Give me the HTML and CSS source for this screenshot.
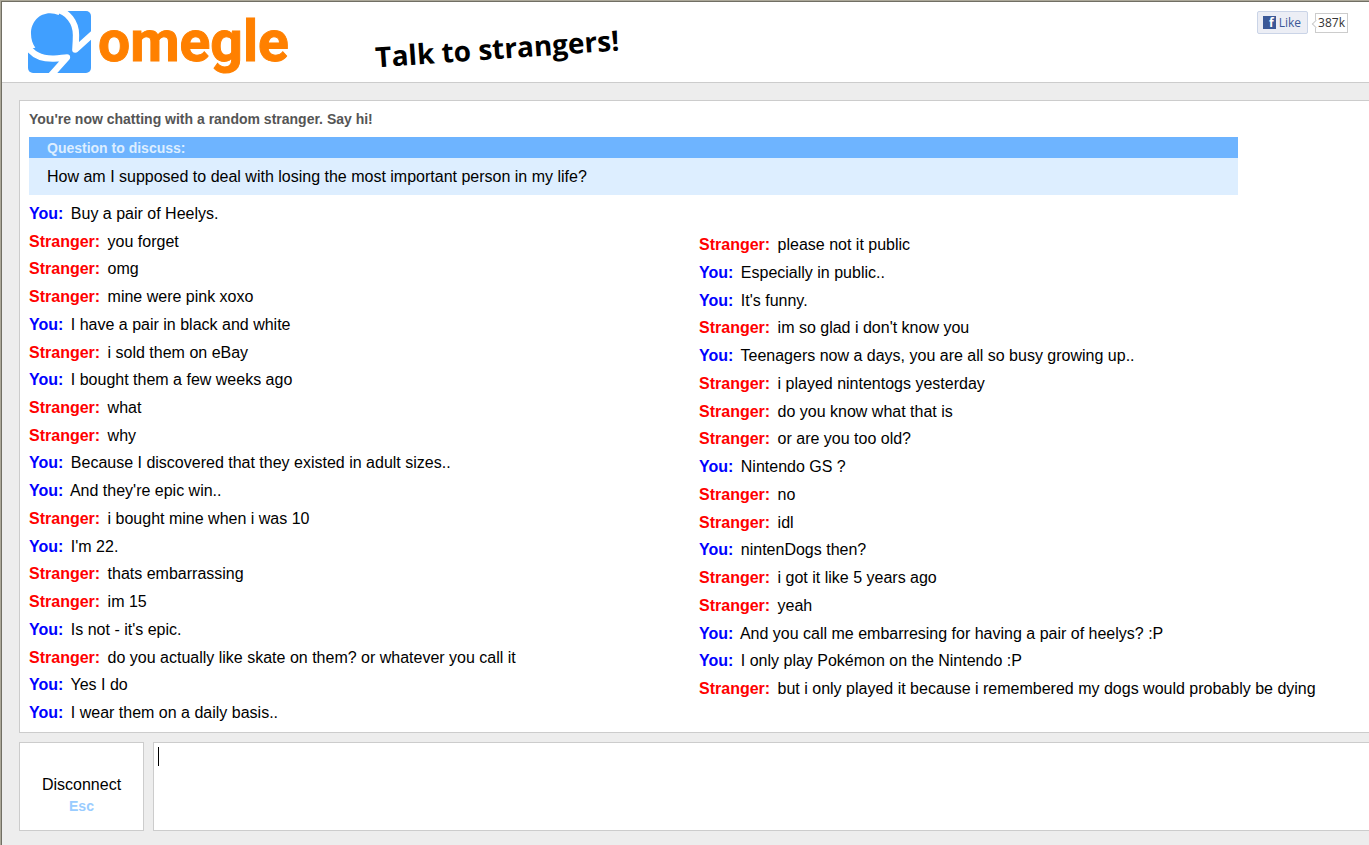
FILE: index.html
```
<!DOCTYPE html>
<html lang="en">
  <head>
    <meta charset="utf-8">
    <title>Omegle</title>
    <meta name="viewport" content="width=device-width, initial-scale=1.0">
    <link rel="stylesheet" href="styles.css">
  </head>
  <body>
    <header class="header">
      <a class="logo" href="#">
        <svg class="logo-mark" viewBox="0 0 189 186" aria-hidden="true">
          <rect width="189" height="186" rx="15" fill="#409fff"/>
          <path fill="#fff" d="M-2 -2H98L92 12Q80 7 66 7C34 7 9 33 9 68C9 85 14 98 22 110L-2 114Z"/>
          <g fill="none" stroke="#fff" stroke-width="19" stroke-linejoin="round">
            <path d="M82 -6C120 2 144 34 144 72C144 90 143 102 142 116L196 67"/>
            <path d="M-6 100C12 132 45 144 78 143C95 143 106 139 117 139L68 194"/>
          </g>
        </svg>
        <span class="logo-text">omegle</span>
      </a>
      <h1 class="tagline">Talk to strangers!</h1>
      <div class="like">
        <button class="like-button" type="button"><span class="fb" aria-hidden="true">f</span>Like</button>
        <span class="like-count">387k</span>
      </div>
    </header>

    <main class="chat">
      <section class="log">
        <p class="status">You're now chatting with a random stranger. Say hi!</p>
        <div class="question">
          <h2>Question to discuss:</h2>
          <p>How am I supposed to deal with losing the most important person in my life?</p>
        </div>
        <div class="columns">
          <div class="messages">
            <p><b class="you">You:</b> Buy a pair of Heelys.</p>
            <p><b class="stranger">Stranger:</b> you forget</p>
            <p><b class="stranger">Stranger:</b> omg</p>
            <p><b class="stranger">Stranger:</b> mine were pink xoxo</p>
            <p><b class="you">You:</b> I have a pair in black and white</p>
            <p><b class="stranger">Stranger:</b> i sold them on eBay</p>
            <p><b class="you">You:</b> I bought them a few weeks ago</p>
            <p><b class="stranger">Stranger:</b> what</p>
            <p><b class="stranger">Stranger:</b> why</p>
            <p><b class="you">You:</b> Because I discovered that they existed in adult sizes..</p>
            <p><b class="you">You:</b> And they're epic win..</p>
            <p><b class="stranger">Stranger:</b> i bought mine when i was 10</p>
            <p><b class="you">You:</b> I'm 22.</p>
            <p><b class="stranger">Stranger:</b> thats embarrassing</p>
            <p><b class="stranger">Stranger:</b> im 15</p>
            <p><b class="you">You:</b> Is not - it's epic.</p>
            <p><b class="stranger">Stranger:</b> do you actually like skate on them? or whatever you call it</p>
            <p><b class="you">You:</b> Yes I do</p>
            <p><b class="you">You:</b> I wear them on a daily basis..</p>
          </div>
          <div class="messages messages-next">
            <p><b class="stranger">Stranger:</b> please not it public</p>
            <p><b class="you">You:</b> Especially in public..</p>
            <p><b class="you">You:</b> It's funny.</p>
            <p><b class="stranger">Stranger:</b> im so glad i don't know you</p>
            <p><b class="you">You:</b> Teenagers now a days, you are all so busy growing up..</p>
            <p><b class="stranger">Stranger:</b> i played nintentogs yesterday</p>
            <p><b class="stranger">Stranger:</b> do you know what that is</p>
            <p><b class="stranger">Stranger:</b> or are you too old?</p>
            <p><b class="you">You:</b> Nintendo GS ?</p>
            <p><b class="stranger">Stranger:</b> no</p>
            <p><b class="stranger">Stranger:</b> idl</p>
            <p><b class="you">You:</b> nintenDogs then?</p>
            <p><b class="stranger">Stranger:</b> i got it like 5 years ago</p>
            <p><b class="stranger">Stranger:</b> yeah</p>
            <p><b class="you">You:</b> And you call me embarresing for having a pair of heelys? :P</p>
            <p><b class="you">You:</b> I only play Pokémon on the Nintendo :P</p>
            <p><b class="stranger">Stranger:</b> but i only played it because i remembered my dogs would probably be dying</p>
          </div>
        </div>
      </section>

      <form class="composer" method="get" action="#">
        <button class="disconnect" type="button">Disconnect <kbd>Esc</kbd></button>
        <div class="entry">
          <textarea name="message" aria-label="Message"></textarea>
          <span class="caret"></span>
        </div>
      </form>
    </main>
  </body>
</html>
```

FILE: styles.css
```
* {
  box-sizing: border-box;
}
html {
  height: 100%;
  border-top: 1px solid #aca899;
  border-left: 1px solid #aca899;
}
body {
  display: flex;
  flex-direction: column;
  min-height: 100%;
  margin: 0;
  border-top: 1px solid #716f64;
  border-left: 1px solid #716f64;
  background-color: #ededed;
  color: #000;
  font: 16px/20px "Liberation Sans", Arial, sans-serif;
}
h1, h2, p {
  margin: 0;
}

/* header */
.header {
  display: flex;
  align-items: flex-start;
  padding: 9px 21px 9px 26px;
  border-bottom: 1px solid #ccc;
  background-color: #fff;
}
.logo {
  display: flex;
  align-items: center;
  gap: 7px;
  height: 62px;
  text-decoration: none;
}
.logo-mark {
  width: 63px;
  height: 62px;
}
.logo-text {
  color: #ff8000;
  font: bold 57px/66px Roboto, sans-serif;
  -webkit-text-stroke: 1px #ff8000;
}
.tagline {
  margin: 17px 0 0 86px;
  font: bold 28px/40px "Open Sans", sans-serif;
  transform: rotate(-4deg);
}
.like {
  display: flex;
  align-items: center;
  gap: 7px;
  margin-left: auto;
  font: 12px/18px "Open Sans", sans-serif;
}
.like-button {
  display: flex;
  align-items: center;
  gap: 3px;
  height: 23px;
  padding: 0 6px 0 5px;
  border: 1px solid #cad4e7;
  border-radius: 2px;
  background-color: #eceef5;
  color: #3b5998;
  font: inherit;
}
.fb {
  width: 13px;
  height: 13px;
  padding-right: 2px;
  background-color: #3b5998;
  color: #fff;
  font: bold 12px/14px "Open Sans", sans-serif;
  text-align: right;
}
.like-count {
  position: relative;
  padding: 0 2px;
  border: 1px solid #ccc;
  background-color: #fff;
  color: #333;
}
.like-count::before {
  content: "";
  position: absolute;
  top: 7px;
  left: -3px;
  width: 5px;
  height: 5px;
  border: 1px solid #ccc;
  border-width: 0 0 1px 1px;
  background-color: #fff;
  transform: rotate(45deg);
}

/* conversation */
.chat {
  display: flex;
  flex: 1;
  flex-direction: column;
  gap: 9px;
  padding: 17px 0 14px 17px;
}
.log {
  display: flex;
  flex: 1;
  flex-direction: column;
  padding: 8px 0 9px 9px;
  border: 1px solid #ccc;
  border-right: 0;
  background-color: #fff;
}
.status {
  color: #555;
  font-size: 14px;
  font-weight: bold;
}
.question {
  margin: 8px 131px 9px 0;
  background-color: #ddeeff;
}
.question h2 {
  padding: 1px 18px 0;
  background-color: #6eb4ff;
  color: #ddeeff;
  font-size: 14px;
  line-height: 20px;
}
.question p {
  padding: 9px 18px 8px;
}
.columns {
  display: grid;
  flex: 1;
  grid-template-columns: 1fr 1fr;
}
.messages {
  display: flex;
  flex-direction: column;
  justify-content: space-between;
  white-space: nowrap;
}
.messages-next {
  padding: 31px 0 24px;
}
.messages b {
  margin-right: 3px;
}
.you {
  color: #0000ff;
}
.stranger {
  color: #ff0000;
}

/* message entry */
.composer {
  display: grid;
  grid-template-columns: 125px 1fr;
  gap: 9px;
  height: 89px;
}
.disconnect {
  padding: 18px 0 0;
  border: 1px solid #ccc;
  background-color: #fff;
  color: #000;
  font: inherit;
}
.disconnect kbd {
  display: block;
  color: #99ccff;
  font: bold 14px/22px "Liberation Sans", Arial, sans-serif;
}
.entry {
  position: relative;
}
.entry textarea {
  display: block;
  width: 100%;
  height: 100%;
  padding: 4px;
  border: 1px solid #ccc;
  border-right: 0;
  outline: 0;
  background-color: #fff;
  font: inherit;
  resize: none;
}
.caret {
  position: absolute;
  top: 5px;
  left: 5px;
  width: 1px;
  height: 19px;
  background-color: #000;
}
.entry textarea:focus + .caret {
  display: none;
}
```
